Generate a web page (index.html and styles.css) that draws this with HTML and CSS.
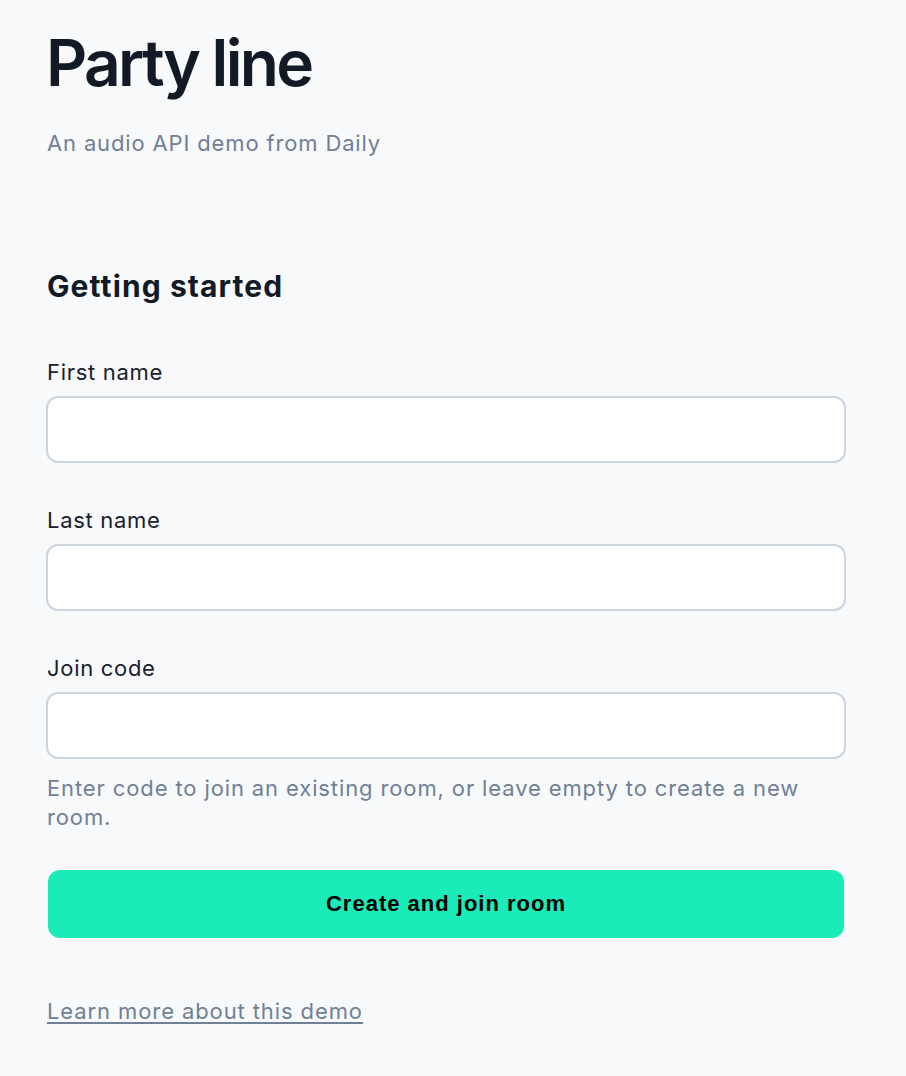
FILE: index.html
```html
<!DOCTYPE html>
<html lang="en">
<head>
<meta charset="utf-8">
<title>Party line</title>
<link rel="stylesheet" href="styles.css">
</head>
<body>
<main class="page">
  <header class="intro">
    <h1 class="title">Party line</h1>
    <p class="subtitle">An audio API demo from Daily</p>
  </header>
  <section class="form-section">
    <h2 class="heading">Getting started</h2>
    <form class="form">
      <div class="field">
        <label class="label" for="first">First name</label>
        <input class="input" id="first" type="text">
      </div>
      <div class="field">
        <label class="label" for="last">Last name</label>
        <input class="input" id="last" type="text">
      </div>
      <div class="field field--help">
        <label class="label" for="code">Join code</label>
        <input class="input" id="code" type="text">
        <p class="help">Enter code to join an existing room, or leave empty to create a new room.</p>
      </div>
      <button class="button" type="button">Create and join room</button>
    </form>
    <a class="link" href="#">Learn more about this demo</a>
  </section>
</main>
</body>
</html>
```

FILE: styles.css
```css
html, body {
  margin: 0;
  padding: 0;
  background: #f7f9fa;
}
body {
  font-family: Inter, "Noto Sans", sans-serif;
  color: #121a26;
}
.page {
  width: 800px;
  padding: 0 60px 0 46px;
  display: flex;
  flex-direction: column;
}
.intro {
  display: flex;
  flex-direction: column;
}
.title {
  margin: 23px 0 0 0;
  font-size: 64px;
  line-height: 80px;
  font-weight: 600;
  letter-spacing: -2.7px;
  color: #121a26;
}
.subtitle {
  margin: 25px 0 0 1px;
  font-size: 22px;
  line-height: 30px;
  letter-spacing: 0.85px;
  color: #718096;
}
.form-section {
  display: flex;
  flex-direction: column;
  margin-top: 110px;
}
.heading {
  margin: 0 0 0 1px;
  font-size: 30px;
  line-height: 36px;
  font-weight: 700;
  letter-spacing: 1.1px;
  color: #121a26;
}
.form {
  display: flex;
  flex-direction: column;
  margin-top: 53px;
}
.field {
  display: flex;
  flex-direction: column;
  margin-bottom: 42px;
}
.field--help {
  margin-bottom: 38px;
}
.label {
  margin: 0 0 9px 1px;
  font-size: 22px;
  line-height: 30px;
  letter-spacing: 0.7px;
  color: #1a202c;
}
.input {
  box-sizing: border-box;
  width: 800px;
  height: 67px;
  margin: 0;
  border: 2px solid #cbd5e0;
  border-radius: 12px;
  background: #ffffff;
  font-family: inherit;
  font-size: 22px;
  padding: 0 16px;
}
.help {
  margin: 15px 0 0 1px;
  font-size: 22px;
  line-height: 29px;
  letter-spacing: 0.88px;
  color: #718096;
}
.button {
  box-sizing: border-box;
  width: 796px;
  height: 68px;
  margin: 0 2px;
  border: 0;
  border-radius: 12px;
  background: #1bebb9;
  color: #000000;
  font-family: "Liberation Sans", Arial, sans-serif;
  font-weight: 700;
  font-size: 22px;
  letter-spacing: 1px;
  cursor: pointer;
}
.link {
  margin-top: 58px;
  margin-left: 1px;
  align-self: flex-start;
  font-size: 22px;
  line-height: 30px;
  letter-spacing: 0.9px;
  color: #718096;
  text-decoration: underline;
  text-underline-offset: 3px;
}
```
